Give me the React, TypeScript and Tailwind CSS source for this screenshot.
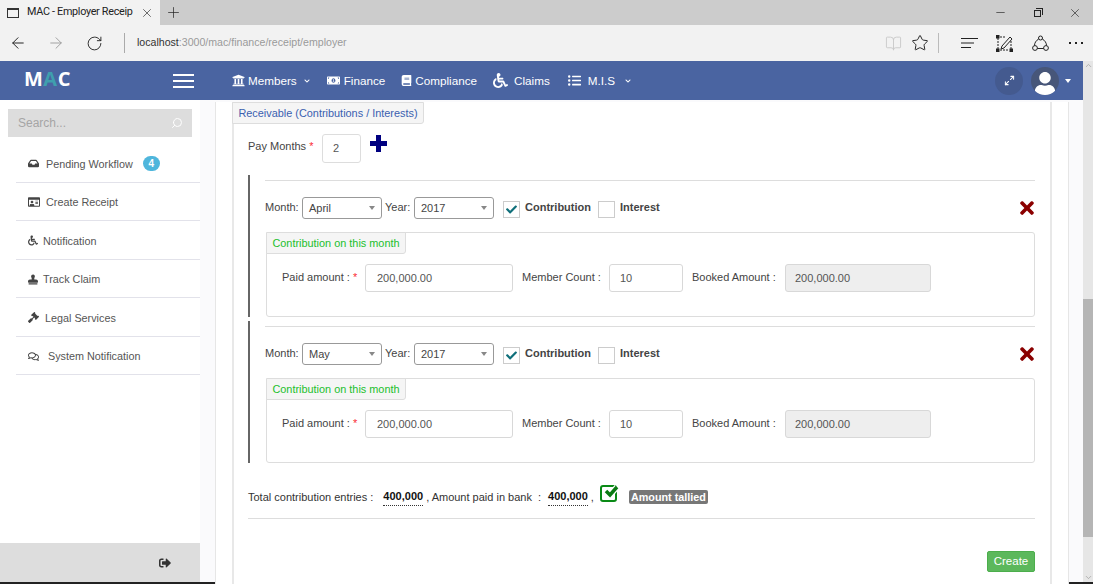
import { ArrowLeft, ArrowRight, BookOpen, ChevronDown, ChevronUp, Minus, Plus, RotateCw, Search, Star, X, Maximize2 } from 'lucide-react'
import {
  FaBook,
  FaCheck,
  FaChevronDown,
  FaGavel,
  FaInbox,
  FaListUl,
  FaMoneyBillAlt,
  FaRegComments,
  FaRegIdCard,
  FaSignOutAlt,
  FaStamp,
  FaTimes,
  FaUniversity,
  FaUser,
  FaWheelchair,
} from 'react-icons/fa'

const sideItems = [
  { icon: <FaInbox className="w-[11px] h-[11px]" />, label: 'Pending Workflow', gap: 'ml-[6px]', badge: '4' },
  { icon: <FaRegIdCard className="w-[12px] h-[12px]" />, label: 'Create Receipt', gap: 'ml-[6px]' },
  { icon: <FaWheelchair className="w-[10px] h-[11px]" />, label: 'Notification', gap: 'ml-[3px]' },
  { icon: <FaStamp className="w-[10px] h-[11px]" />, label: 'Track Claim', gap: 'ml-[3px]' },
  { icon: <FaGavel className="w-[11px] h-[11px]" />, label: 'Legal Services', gap: 'ml-[5px]' },
  { icon: <FaRegComments className="w-[11px] h-[11px]" />, label: 'System Notification', gap: 'ml-[8px]' },
]

function Tab({ label, color, className }: { label: string; color: string; className: string }) {
  return (
    <div className={`${className} h-[22px] flex items-center justify-center bg-[#f5f5f5] border border-[#dddddd] rounded-br-[3px] text-[10.9px] ${color}`}>
      {label}
    </div>
  )
}

function Caret() {
  return <span className="w-0 h-0 border-x-[3.5px] border-x-transparent border-t-[4px] border-t-[#888888]" />
}

function Select({ value }: { value: string }) {
  return (
    <div className="w-[80px] h-[22px] flex items-center justify-between pl-[6px] pr-[6px] bg-white border border-[#999999] rounded-[3px] text-[11px] text-[#444444]">
      {value}
      <Caret />
    </div>
  )
}

function Field({ value, className }: { value: string; className: string }) {
  return (
    <div className={`${className} h-[28px] flex items-center border border-[#d8d8d8] rounded-[3px] text-[11px] text-[#555555]`}>
      {value}
    </div>
  )
}

function Entry({ month }: { month: string }) {
  return (
    <div className="ml-[14px] mr-[15px] border-l-2 border-[#666666] h-[142px] pl-[15px] text-[#444444]">
      <div className="mt-[5px] border-t border-[#dddddd] pt-[16px]" />
      <div className="flex items-center h-[22px] text-[11px]">
        <span className="w-[37px] -mt-[2px]">Month:</span>
        <Select value={month} />
        <span className="ml-[3px] w-[29px] -mt-[2px]">Year:</span>
        <Select value="2017" />
        <span className="ml-[9px] w-[17px] h-[17px] mt-[2px] flex items-center justify-center border border-[#cccccc] bg-white">
          <FaCheck className="w-[11px] h-[11px] text-[#0f6f7a]" />
        </span>
        <span className="ml-[5px] w-[73px] font-bold -mt-[1px]">Contribution</span>
        <span className="w-[17px] h-[17px] mt-[2px] border border-[#cccccc] bg-white" />
        <span className="ml-[5px] font-bold -mt-[1px]">Interest</span>
        <FaTimes className="ml-auto w-[16px] h-[20px] text-[#8b0000]" />
      </div>
      <div className="ml-[1px] mt-[13px] h-[85px] border border-[#dddddd] rounded-[3px]">
        <Tab label="Contribution on this month" color="text-[#22c02c]" className="w-[140px] -mt-px -ml-px" />
        <div className="flex items-center mt-[10px] pl-[15px] text-[11px] whitespace-nowrap">
          <span className="w-[83px] -mt-[2px]">
            Paid amount : <span className="text-red-500">*</span>
          </span>
          <Field value="200,000.00" className="w-[148px] pl-[11px] bg-white" />
          <span className="ml-[9px] w-[87px] -mt-[2px]">Member Count :</span>
          <Field value="10" className="w-[74px] pl-[10px] bg-white" />
          <span className="ml-[9px] w-[93px] -mt-[2px]">Booked Amount :</span>
          <Field value="200,000.00" className="w-[146px] pl-[9px] bg-[#eeeeee]" />
        </div>
      </div>
    </div>
  )
}

export default function App() {
  return (
    <div className="relative w-[1093px] h-[584px] overflow-hidden bg-white font-['Liberation_Sans',sans-serif]">
      {/* Browser tab strip */}
      <div className="h-[25px] bg-[#cccccc] flex items-center text-[#222222]">
        <div className="w-[160px] h-full bg-[#f2f2f2] flex items-center pl-[7px]">
          <span className="w-[12px] h-[10px] border border-[#333333] border-t-[2px]" />
          <span className="ml-[8px] w-[110px] whitespace-nowrap font-['Roboto',sans-serif] text-[10.8px] tracking-[-0.3px]">MAC - Employer Receip</span>
          <X className="ml-[3px] w-[14px] h-[14px]" strokeWidth={1.1} />
        </div>
        <Plus className="ml-[5px] w-[17px] h-[17px]" strokeWidth={1} />
        <div className="ml-auto flex items-center">
          <Minus className="w-[13px] h-[13px]" strokeWidth={1.2} />
          <span className="relative ml-[27px] w-[7px] h-[7px] mt-[2px] border border-[#222222] bg-[#cccccc] before:absolute before:-top-[3px] before:-right-[3px] before:w-[7px] before:h-[7px] before:border-t before:border-r before:border-[#222222]" />
          <X className="ml-[27px] mr-[11px] w-[14px] h-[14px]" strokeWidth={1.1} />
        </div>
      </div>

      {/* Browser toolbar */}
      <div className="h-[36px] bg-[#f2f2f2] flex items-center text-[#222222]">
        <ArrowLeft className="ml-[9px] w-[18px] h-[18px]" strokeWidth={1.3} />
        <ArrowRight className="ml-[20px] w-[18px] h-[18px] text-[#999999]" strokeWidth={1.2} />
        <RotateCw className="ml-[21px] w-[17px] h-[17px]" strokeWidth={1.3} />
        <span className="ml-[21px] w-px h-[20px] bg-[#aaaaaa]" />
        <span className="ml-[12px] text-[10.6px] text-[#9a9a9a]">
          <span className="text-[#333333]">localhost</span>:3000/mac/finance/receipt/employer
        </span>
        <div className="ml-auto flex items-center">
          <BookOpen className="w-[17px] h-[17px] text-[#c8c8c8]" strokeWidth={1.3} />
          <Star className="ml-[9px] w-[18px] h-[18px]" strokeWidth={1.3} />
          <span className="ml-[9px] w-px h-[20px] bg-[#bbbbbb]" />
          <svg className="ml-[22px]" width="17" height="12" viewBox="0 0 17 12" fill="none" stroke="#222222">
            <path d="M0 1.5h17M0 6h13M0 10.5h10" />
          </svg>
          <svg className="ml-[18px]" width="17" height="17" viewBox="0 0 17 17" fill="none" stroke="#222222">
            <path d="M2 3v11M15 6v8M4 15h9M4 2h6" strokeDasharray="2 1" />
            <path d="M6 11l8-9 2 2-8 9-3 1z" />
            <rect x="0" y="0" width="3" height="3" fill="#222222" />
            <rect x="0" y="14" width="3" height="3" fill="#222222" />
            <rect x="14" y="14" width="3" height="3" fill="#222222" />
          </svg>
          <svg className="ml-[19px]" width="17" height="17" viewBox="0 0 17 17" fill="none" stroke="#222222">
            <circle cx="8.5" cy="3" r="2" />
            <circle cx="3" cy="13" r="2.4" />
            <circle cx="14" cy="13" r="2.4" />
            <path d="M6.7 4C4 5.5 2.5 8 2.5 10.5M10.3 4c2.7 1.5 4.2 4 4.2 6.5M5.4 13.5h6.2" />
          </svg>
          <span className="ml-[20px] mr-[10px] flex gap-[4px]">
            <span className="w-[2px] h-[2px] bg-[#222222]" />
            <span className="w-[2px] h-[2px] bg-[#222222]" />
            <span className="w-[2px] h-[2px] bg-[#222222]" />
          </span>
        </div>
      </div>

      <div className="flex h-[521px]">
        <div className="w-[1083px] flex flex-col">
          {/* App header */}
          <header className="h-[39px] shrink-0 bg-[#4a64a1] flex items-center text-white text-[11.7px]">
            <span className="ml-[24px] w-[149px] -mt-[4px] text-[20px] font-bold tracking-[0.5px] font-['Open_Sans',sans-serif]">
              M<span className="text-[#3f9fae]">A</span>C
            </span>
            <span className="w-[21px] flex flex-col gap-[4px]">
              <span className="h-[2px] bg-white" />
              <span className="h-[2px] bg-white" />
              <span className="h-[2px] bg-white" />
            </span>
            <FaUniversity className="ml-[38px] w-[13px] h-[13px]" />
            <span className="ml-[3px]">Members</span>
            <FaChevronDown className="ml-[7px] w-[6px] h-[6px]" />
            <FaMoneyBillAlt className="ml-[17px] w-[13px] h-[13px]" />
            <span className="ml-[4px]">Finance</span>
            <FaBook className="ml-[16px] w-[11px] h-[11px]" />
            <span className="ml-[3px]">Compliance</span>
            <FaWheelchair className="ml-[16px] w-[15px] h-[17px]" />
            <span className="ml-[6px]">Claims</span>
            <FaListUl className="ml-[18px] w-[13px] h-[13px]" />
            <span className="ml-[7px]">M.I.S</span>
            <FaChevronDown className="ml-[10px] w-[6px] h-[6px]" />
            <div className="ml-auto flex items-center mr-[12px]">
              <span className="w-[28px] h-[28px] rounded-full bg-[#445a8f] flex items-center justify-center">
                <Maximize2 className="w-[11px] h-[11px]" strokeWidth={2.2} />
              </span>
              <span className="ml-[8px] w-[28px] h-[28px] rounded-full bg-[#475679] flex items-end justify-center overflow-hidden">
                <FaUser className="w-[22px] h-[23px]" />
              </span>
              <span className="ml-[6px] w-0 h-0 border-x-[3.5px] border-x-transparent border-t-[4px] border-t-white" />
            </div>
          </header>

          <div className="flex-1 flex min-h-0">
            {/* Sidebar */}
            <aside className="w-[200px] shrink-0 flex flex-col bg-white">
              <div className="mx-[8px] mt-[9px] h-[28px] bg-[#dddddd] flex items-center justify-between pl-[10px] pr-[9px] text-[12px] text-[#a5a5a5]">
                Search...
                <Search className="w-[12px] h-[12px] text-white -scale-x-100" />
              </div>
              <nav className="mt-[7px] ml-[16px]">
                {sideItems.map((item) => (
                  <div key={item.label} className="h-[38.5px] flex items-center pl-[12px] pt-[2px] border-b border-[#e2e2ea] text-[10.8px] text-[#555555]">
                    <span className="w-[12px] flex text-[#444444]">{item.icon}</span>
                    <span className={item.gap}>{item.label}</span>
                    {item.badge && (
                      <span className="ml-[10px] w-[17px] h-[15px] rounded-full bg-[#4fb6dc] text-white text-[10px] font-bold flex items-center justify-center">
                        {item.badge}
                      </span>
                    )}
                  </div>
                ))}
              </nav>
              <div className="mt-auto h-[39px] bg-[#dddddd] flex items-center justify-end pr-[29px]">
                <FaSignOutAlt className="w-[12px] h-[12px] text-[#333333]" />
              </div>
            </aside>

            {/* Page body */}
            <main className="flex-1 min-w-0 bg-[#fafafc] pl-[15px] pr-[14px]">
              <div className="h-full bg-white border-x border-[#e6e6e6] pl-[16px] pr-[16px]">
                <div className="h-full bg-white border-x-2 border-[#e8e8e8]">
                  <Tab label="Receivable (Contributions / Interests)" color="text-[#3a5fb0]" className="w-[192px] mt-[2px] -ml-[2px]" />
                  <div className="flex items-center ml-[14px] mt-[10px] h-[29px] text-[11px] text-[#444444]">
                    <span className="w-[74px] -mt-[4px]">
                      Pay Months <span className="text-red-500">*</span>
                    </span>
                    <div className="w-[39px] h-[29px] flex items-center pl-[10px] border border-[#dddddd] rounded-[3px] text-[11px] text-[#555555]">
                      2
                    </div>
                    <svg className="ml-[9px] -mt-[10px]" width="17" height="17" viewBox="0 0 17 17" fill="#000080">
                      <path d="M6 0h5v6h6v5h-6v6H6v-6H0V6h6z" />
                    </svg>
                  </div>
                  <div className="mt-[12px] flex flex-col gap-[4px]">
                    <Entry month="April" />
                    <Entry month="May" />
                  </div>
                  <div className="flex items-center ml-[14px] mt-[23px] h-[22px] text-[11px] text-[#333333]">
                    Total contribution entries :
                    <span className="ml-[10px] font-bold text-[#111111] border-b border-dotted border-[#333333]">400,000</span>
                    <span className="ml-[3px]">, Amount paid in bank&nbsp; :</span>
                    <span className="ml-[7px] font-bold text-[#111111] border-b border-dotted border-[#333333]">400,000</span>
                    <span className="ml-[3px]">,</span>
                    <svg className="ml-[6px] -mt-[8px]" width="20" height="18" viewBox="0 0 20 18" fill="none">
                      <rect x="1" y="2" width="15" height="15" rx="2" stroke="#0a8a16" strokeWidth="2" />
                      <path d="M6 7l4 4 7-8" stroke="#ffffff" strokeWidth="6" />
                      <path d="M6 7l4 4 7-8" stroke="#0a7a12" strokeWidth="3.5" />
                    </svg>
                    <span className="ml-[9px] px-[2px] h-[14px] flex items-center bg-[#777777] rounded-[2px] text-white text-[10.8px] font-bold">Amount tallied</span>
                  </div>
                  <div className="ml-[14px] mr-[15px] mt-[10px] border-t border-[#dddddd]" />
                  <div className="flex justify-end mr-[15px] mt-[32px]">
                    <button className="w-[48px] h-[21px] bg-[#5cb85c] border border-[#4cae4c] rounded-[2px] text-white text-[11.5px]">Create</button>
                  </div>
                </div>
              </div>
            </main>
          </div>
        </div>

        {/* Page scrollbar */}
        <div className="w-[10px] bg-[#e6e6e6] flex flex-col items-center">
          <ChevronUp className="w-[9px] h-[9px] text-[#a0a0a0]" />
          <div className="h-[229px]" />
          <div className="w-full h-[238px] bg-[#b5b5b5]" />
          <ChevronDown className="mt-auto w-[9px] h-[9px] text-[#a0a0a0]" />
        </div>
      </div>

      <div className="h-[2px] bg-[#222222]" />
    </div>
  )
}
